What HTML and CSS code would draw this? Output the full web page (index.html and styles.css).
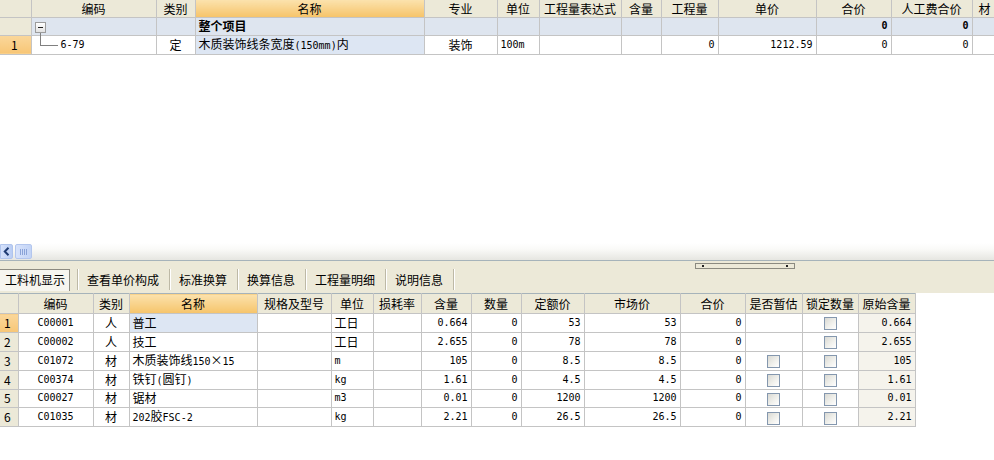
FILE: index.html
```html
<!DOCTYPE html>
<html lang="zh-CN">
<head>
<meta charset="utf-8">
<title>工料机</title>
<link rel="stylesheet" href="styles.css">
</head>
<body>
<div class="app">
  <div class="top-pane">
    <table class="grid grid-top">
      <colgroup>
        <col class="t0"><col class="t1"><col class="t2"><col class="t3"><col class="t4"><col class="t5"><col class="t6"><col class="t7"><col class="t8"><col class="t9"><col class="t10"><col class="t11"><col class="t12">
      </colgroup>
      <thead>
        <tr>
          <th class="rn"></th><th>编码</th><th>类别</th><th class="hl">名称</th><th>专业</th><th>单位</th><th>工程量表达式</th><th>含量</th><th>工程量</th><th>单价</th><th>合价</th><th>人工费合价</th><th class="cut">材</th>
        </tr>
      </thead>
      <tbody>
        <tr class="group">
          <td class="rn"></td>
          <td class="code-group"><span class="collapse"></span></td>
          <td></td>
          <td class="b">整个项目</td>
          <td></td><td></td><td></td><td></td><td></td><td></td>
          <td class="r m b">0</td><td class="r m b">0</td><td></td>
        </tr>
        <tr>
          <td class="rn sel">1</td>
          <td class="code-child m">6-79</td>
          <td class="c">定</td>
          <td class="cur">木质装饰线条宽度<span class="m">(150mm)</span>内</td>
          <td class="c">装饰</td>
          <td class="m">100m</td>
          <td></td><td></td>
          <td class="r m">0</td>
          <td class="r m">1212.59</td>
          <td class="r m">0</td>
          <td class="r m">0</td>
          <td></td>
        </tr>
      </tbody>
    </table>
  </div>

  <div class="hscroll">
    <span class="sb-btn">
      <svg width="7" height="9" viewBox="0 0 7 9"><path d="M5.5 0.8 L1.8 4.5 L5.5 8.2" fill="none" stroke="#1f3b73" stroke-width="2"/></svg>
    </span>
    <span class="sb-thumb"><i></i><i></i><i></i><i></i></span>
  </div>

  <div class="tabbar">
    <div class="tabs">
      <span class="tab active">工料机显示</span>
      <span class="sep"></span>
      <span class="tab">查看单价构成</span>
      <span class="sep"></span>
      <span class="tab">标准换算</span>
      <span class="sep"></span>
      <span class="tab">换算信息</span>
      <span class="sep"></span>
      <span class="tab">工程量明细</span>
      <span class="sep"></span>
      <span class="tab">说明信息</span>
      <span class="sep"></span>
    </div>
    <span class="grip"><i></i><i></i></span>
  </div>

  <div class="bottom-pane">
    <table class="grid grid-bottom">
      <colgroup>
        <col class="b0"><col class="b1"><col class="b2"><col class="b3"><col class="b4"><col class="b5"><col class="b6"><col class="b7"><col class="b8"><col class="b9"><col class="b10"><col class="b11"><col class="b12"><col class="b13"><col class="b14">
      </colgroup>
      <thead>
        <tr>
          <th class="rn"></th><th>编码</th><th>类别</th><th class="hl">名称</th><th>规格及型号</th><th>单位</th><th>损耗率</th><th>含量</th><th>数量</th><th>定额价</th><th>市场价</th><th>合价</th><th>是否暂估</th><th>锁定数量</th><th>原始含量</th>
        </tr>
      </thead>
      <tbody>
        <tr>
          <td class="rn sel">1</td><td class="c m">C00001</td><td class="c">人</td><td class="cur">普工</td><td></td><td>工日</td><td></td>
          <td class="r m">0.664</td><td class="r m">0</td><td class="r m">53</td><td class="r m">53</td><td class="r m">0</td>
          <td class="c"></td><td class="c"><span class="cb"></span></td><td class="r m orig">0.664</td>
        </tr>
        <tr>
          <td class="rn">2</td><td class="c m">C00002</td><td class="c">人</td><td>技工</td><td></td><td>工日</td><td></td>
          <td class="r m">2.655</td><td class="r m">0</td><td class="r m">78</td><td class="r m">78</td><td class="r m">0</td>
          <td class="c"></td><td class="c"><span class="cb"></span></td><td class="r m orig">2.655</td>
        </tr>
        <tr>
          <td class="rn">3</td><td class="c m">C01072</td><td class="c">材</td><td>木质装饰线<span class="m">150</span>×<span class="m">15</span></td><td></td><td class="m">m</td><td></td>
          <td class="r m">105</td><td class="r m">0</td><td class="r m">8.5</td><td class="r m">8.5</td><td class="r m">0</td>
          <td class="c"><span class="cb"></span></td><td class="c"><span class="cb"></span></td><td class="r m orig">105</td>
        </tr>
        <tr>
          <td class="rn">4</td><td class="c m">C00374</td><td class="c">材</td><td>铁钉<span class="m">(</span>圆钉<span class="m">)</span></td><td></td><td class="m">kg</td><td></td>
          <td class="r m">1.61</td><td class="r m">0</td><td class="r m">4.5</td><td class="r m">4.5</td><td class="r m">0</td>
          <td class="c"><span class="cb"></span></td><td class="c"><span class="cb"></span></td><td class="r m orig">1.61</td>
        </tr>
        <tr>
          <td class="rn">5</td><td class="c m">C00027</td><td class="c">材</td><td>锯材</td><td></td><td class="m">m3</td><td></td>
          <td class="r m">0.01</td><td class="r m">0</td><td class="r m">1200</td><td class="r m">1200</td><td class="r m">0</td>
          <td class="c"><span class="cb"></span></td><td class="c"><span class="cb"></span></td><td class="r m orig">0.01</td>
        </tr>
        <tr>
          <td class="rn">6</td><td class="c m">C01035</td><td class="c">材</td><td><span class="m">202</span>胶<span class="m">FSC-2</span></td><td></td><td class="m">kg</td><td></td>
          <td class="r m">2.21</td><td class="r m">0</td><td class="r m">26.5</td><td class="r m">26.5</td><td class="r m">0</td>
          <td class="c"><span class="cb"></span></td><td class="c"><span class="cb"></span></td><td class="r m orig">2.21</td>
        </tr>
      </tbody>
    </table>
  </div>
</div>
</body>
</html>
```

FILE: styles.css
```css
* { box-sizing: border-box; }

html, body {
  margin: 0;
  padding: 0;
  background: #ffffff;
}

body {
  width: 994px;
  height: 460px;
  overflow: hidden;
  font-family: "Noto Sans CJK SC", "Noto Sans", sans-serif;
  font-size: 12px;
  color: #000;
}

.app {
  display: flex;
  flex-direction: column;
  width: 994px;
}

/* ---------- grids ---------- */
.grid {
  border-collapse: collapse;
  table-layout: fixed;
}

.grid th,
.grid td {
  border: 1px solid #c4c4c4;
  padding: 0 3px;
  white-space: nowrap;
  overflow: hidden;
  font-weight: normal;
  text-align: left;
  vertical-align: middle;
}

.grid th {
  background: #ece9d8;
  text-align: center;
  color: #000;
}

.grid th.hl {
  background: linear-gradient(#fbe2ad, #f6c46a);
}

.grid th.cut {
  text-align: left;
  padding-left: 6px;
}

.grid td.rn {
  background: #ece9d8;
}

.grid td.rn.sel {
  background: linear-gradient(#fad79b, #f7c676);
}

.grid td.cur {
  background: #dde6f3;
}

.grid .c { text-align: center; }
.grid .r { text-align: right; }
.grid td.b { font-weight: bold; }

.m {
  font-family: "DejaVu Sans Mono", "Liberation Mono", monospace;
  font-size: 10px;
}

/* ---------- top grid ---------- */
.top-pane {
  height: 243px;
  overflow: hidden;
}

.grid-top { width: 1044px; }

.grid-top .t0 { width: 31px; }
.grid-top .t1 { width: 125px; }
.grid-top .t2 { width: 39px; }
.grid-top .t3 { width: 229px; }
.grid-top .t4 { width: 73px; }
.grid-top .t5 { width: 42px; }
.grid-top .t6 { width: 82px; }
.grid-top .t7 { width: 40px; }
.grid-top .t8 { width: 57px; }
.grid-top .t9 { width: 98px; }
.grid-top .t10 { width: 75px; }
.grid-top .t11 { width: 81px; }
.grid-top .t12 { width: 72px; }

.grid-top th {
  height: 17px;
  line-height: 15px;
  border-top: none;
}

.grid-top td {
  height: 18px;
  line-height: 16px;
}

.grid-top th:first-child,
.grid-top td:first-child {
  border-left: none;
}

.grid-top td.rn {
  padding-left: 11px;
}

.grid-top tr.group td {
  background: #dee5ef;
}

.grid-top tr.group td.rn {
  background: #ece9d8;
}

.grid-top td.code-group {
  padding-left: 3px;
}

.collapse {
  display: inline-flex;
  align-items: center;
  justify-content: center;
  width: 11px;
  height: 11px;
  border: 1px solid #9c9c9c;
  background: linear-gradient(#ffffff, #e2e2e2);
  vertical-align: middle;
  margin-top: -1px;
}

.collapse::after {
  content: "";
  width: 5px;
  height: 1px;
  background: #222;
}

.grid-top td.code-child {
  position: relative;
  overflow: visible;
  padding-left: 29px;
}

.code-child::before {
  content: "";
  position: absolute;
  left: 8px;
  top: -3px;
  width: 17px;
  height: 12px;
  border-left: 1px solid #808080;
  border-bottom: 1px solid #808080;
}

/* ---------- horizontal scrollbar ---------- */
.hscroll {
  height: 18px;
  display: flex;
  align-items: center;
  gap: 2px;
  background: linear-gradient(#ffffff 0%, #fafaf8 35%, #e6e6e1 100%);
  border-bottom: 1px solid #a6b3ba;
}

.sb-btn {
  width: 13px;
  height: 15px;
  display: flex;
  align-items: center;
  justify-content: center;
  background: linear-gradient(90deg, #d6e2fb, #b9cdf4);
  border: 1px solid #b0c4ec;
  border-radius: 0 2px 2px 0;
}

.sb-thumb {
  width: 17px;
  height: 15px;
  display: flex;
  align-items: center;
  justify-content: center;
  gap: 1px;
  background: linear-gradient(90deg, #d8e3fb, #c3d4f6);
  border: 1px solid #b3c6ee;
  border-radius: 2px;
}

.sb-thumb i {
  width: 1px;
  height: 6px;
  background: #8aa3d8;
}

/* ---------- tab bar ---------- */
.tabbar {
  position: relative;
  height: 32px;
  background: #ece9d8;
  padding-top: 8px;
}

.tabs {
  display: flex;
  align-items: flex-start;
  height: 22px;
}

.tab {
  height: 22px;
  line-height: 21px;
  padding: 0 10px 0 8px;
  font-size: 12px;
  white-space: nowrap;
}

.tab.active {
  padding: 0 4px 0 5px;
  margin-right: 7px;
  background: #f6f5ef;
  border-top: 1px solid #8c8a80;
  border-right: 1px solid #8c8a80;
  line-height: 20px;
}

.sep {
  width: 2px;
  height: 21px;
  border-left: 1px solid #bdb9a6;
  border-right: 1px solid #ffffff;
}

.grip {
  position: absolute;
  left: 695px;
  top: 2px;
  width: 100px;
  height: 6px;
  border: 1px solid #8b8a80;
  background: #ece9d8;
  display: flex;
  align-items: center;
  justify-content: space-between;
  padding: 0 6px;
}

.grip i {
  width: 2px;
  height: 2px;
  background: #222;
}

/* ---------- bottom grid ---------- */
.bottom-pane {
  height: 167px;
}

.grid-bottom { width: 915px; }

.grid-bottom .b0 { width: 18px; }
.grid-bottom .b1 { width: 75px; }
.grid-bottom .b2 { width: 36px; }
.grid-bottom .b3 { width: 128px; }
.grid-bottom .b4 { width: 74px; }
.grid-bottom .b5 { width: 42px; }
.grid-bottom .b6 { width: 48px; }
.grid-bottom .b7 { width: 50px; }
.grid-bottom .b8 { width: 50px; }
.grid-bottom .b9 { width: 63px; }
.grid-bottom .b10 { width: 96px; }
.grid-bottom .b11 { width: 65px; }
.grid-bottom .b12 { width: 57px; }
.grid-bottom .b13 { width: 56px; }
.grid-bottom .b14 { width: 57px; }

.grid-bottom th {
  height: 20px;
  line-height: 18px;
  border-top: 1px solid #a6b3ba;
}

.grid-bottom td {
  height: 18.8px;
  line-height: 16px;
}

.grid-bottom th:first-child,
.grid-bottom td:first-child {
  border-left: none;
}

.grid-bottom td.rn {
  padding-left: 4px;
}

.grid-bottom td.orig {
  background: #f5f3ec;
}

.cb {
  display: inline-block;
  width: 13px;
  height: 13px;
  border: 1px solid #8497ae;
  background: linear-gradient(135deg, #d9d9d3 0%, #f2f2ee 60%, #ffffff 100%);
  vertical-align: middle;
  margin-top: -2px;
}
```
